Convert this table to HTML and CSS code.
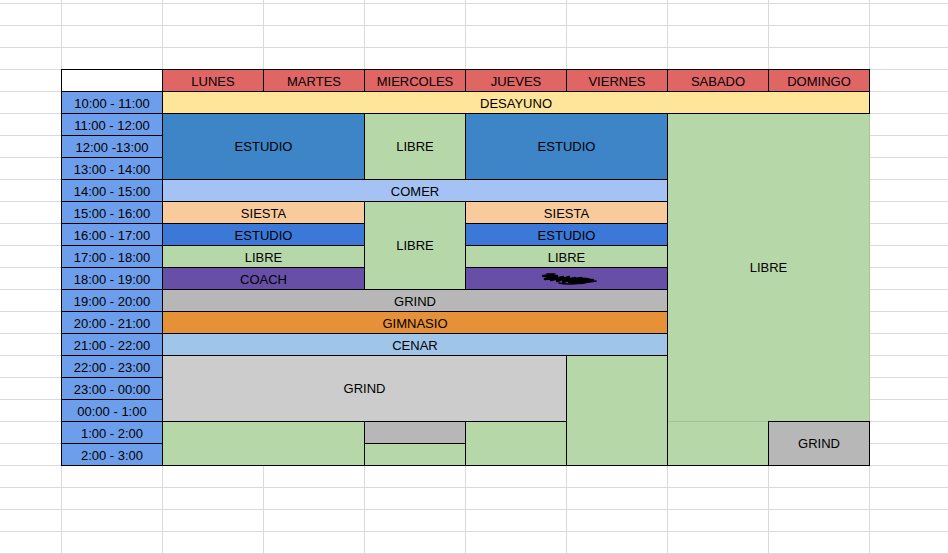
FILE: index.html
```html
<!DOCTYPE html>
<html lang="es">
<head>
<meta charset="utf-8">
<title>Horario</title>
<link rel="stylesheet" href="styles.css">
</head>
<body>
<div class="sheet">
  <div class="timetable">
    <div class="cell corner"></div>
    <div class="cell day">LUNES</div>
    <div class="cell day">MARTES</div>
    <div class="cell day">MIERCOLES</div>
    <div class="cell day">JUEVES</div>
    <div class="cell day">VIERNES</div>
    <div class="cell day">SABADO</div>
    <div class="cell day">DOMINGO</div>

    <div class="cell time">10:00 - 11:00</div>
    <div class="cell desayuno c7">DESAYUNO</div>

    <div class="cell time">11:00 - 12:00</div>
    <div class="cell estudio c2 r3">ESTUDIO</div>
    <div class="cell libre r3">LIBRE</div>
    <div class="cell estudio c2 r3">ESTUDIO</div>
    <div class="cell libre big c2 r14">LIBRE</div>

    <div class="cell time">12:00 -13:00</div>
    <div class="cell time">13:00 - 14:00</div>

    <div class="cell time">14:00 - 15:00</div>
    <div class="cell comer c5">COMER</div>

    <div class="cell time">15:00 - 16:00</div>
    <div class="cell siesta c2">SIESTA</div>
    <div class="cell libre r4">LIBRE</div>
    <div class="cell siesta c2">SIESTA</div>

    <div class="cell time">16:00 - 17:00</div>
    <div class="cell estudio2 c2">ESTUDIO</div>
    <div class="cell estudio2 c2">ESTUDIO</div>

    <div class="cell time">17:00 - 18:00</div>
    <div class="cell libre c2">LIBRE</div>
    <div class="cell libre c2">LIBRE</div>

    <div class="cell time">18:00 - 19:00</div>
    <div class="cell coach c2">COACH</div>
    <div class="cell coach c2">
      <svg class="scribble" width="56" height="14" viewBox="0 0 56 14" aria-hidden="true">
        <path d="M2 4 L12 3 L6 6 L16 4 L10 8 L22 5 L16 9 L28 5 L22 10 L34 6 L28 10 L40 6 L34 10 L46 7 L40 11 L52 8" fill="none" stroke="#000" stroke-width="2.4" stroke-linejoin="round" stroke-linecap="round"/>
        <path d="M4 7 C12 5 20 8 30 7 S44 6 50 8" fill="none" stroke="#000" stroke-width="2.6" stroke-linecap="round"/>
        <path d="M6 2 L14 2 M18 11 C26 13 34 12 42 11 L55 9" fill="none" stroke="#000" stroke-width="1.6" stroke-linecap="round"/>
        <path d="M20 8 L38 8 L30 11 L44 9" fill="none" stroke="#000" stroke-width="2.2" stroke-linecap="round" stroke-linejoin="round"/>
      </svg>
    </div>

    <div class="cell time">19:00 - 20:00</div>
    <div class="cell grind c5">GRIND</div>

    <div class="cell time">20:00 - 21:00</div>
    <div class="cell gimnasio c5">GIMNASIO</div>

    <div class="cell time">21:00 - 22:00</div>
    <div class="cell cenar c5">CENAR</div>

    <div class="cell time">22:00 - 23:00</div>
    <div class="cell grind-light c4 r3">GRIND</div>
    <div class="cell libre r5"></div>

    <div class="cell time">23:00 - 00:00</div>
    <div class="cell time">00:00 - 1:00</div>

    <div class="cell time">1:00 - 2:00</div>
    <div class="cell libre c2 r2"></div>
    <div class="cell grind"></div>
    <div class="cell libre r2"></div>
    <div class="cell libre r2 open-top"></div>
    <div class="cell grind r2">GRIND</div>

    <div class="cell time">2:00 - 3:00</div>
    <div class="cell libre"></div>
  </div>
</div>
</body>
</html>
```

FILE: styles.css
```css
html, body {
  margin: 0;
  padding: 0;
}

body {
  font-family: "Liberation Sans", Arial, sans-serif;
  font-size: 13px;
  color: #000;
  background: #fff;
}

.sheet {
  height: 554px;
  overflow: hidden;
  padding: 69px 0 0 61px;
  box-sizing: border-box;
  background-color: #fff;
  background-image:
    linear-gradient(to right, #dadada 1px, transparent 1px),
    linear-gradient(to bottom, #dadada 1px, transparent 1px);
  background-size: 101px 100%, 100% 22px;
  background-position: 61px 0, 0 3px;
}

.timetable {
  display: grid;
  width: max-content;
  grid-template-columns: repeat(8, 100px);
  grid-template-rows: repeat(18, 21px);
  gap: 1px;
  padding: 1px;
  background: #000;
}

.cell {
  display: flex;
  align-items: center;
  justify-content: center;
  padding-top: 1px;
  box-sizing: border-box;
  white-space: nowrap;
  line-height: 15px;
}

.c2 { grid-column: span 2; }
.c4 { grid-column: span 4; }
.c5 { grid-column: span 5; }
.c7 { grid-column: span 7; }
.r2 { grid-row: span 2; }
.r3 { grid-row: span 3; }
.r4 { grid-row: span 4; }
.r5 { grid-row: span 5; }
.r14 { grid-row: span 14; }

.r2, .r3, .r4, .r5, .r14 {
  padding-top: 0;
  padding-bottom: 1px;
}

.corner { background: #fff; }
.day { background: #e06666; }
.time { background: #6d9eeb; }
.desayuno { background: #ffe599; }
.estudio { background: #3d85c6; }
.estudio2 { background: #3c78d8; }
.libre { background: #b6d7a8; }
.comer { background: #a4c2f4; }
.siesta { background: #f9cb9c; }
.coach { background: #674ea7; }
.grind { background: #b7b7b7; }
.grind-light { background: #cccccc; }
.gimnasio { background: #e69138; }
.cenar { background: #9fc5e8; }

.big {
  margin-right: -1px;
  border-right: 1px solid #a3c596;
}

.open-top {
  margin-top: -1px;
  border-top: 1px solid #a3c596;
}

.scribble {
  display: block;
  margin-left: 4px;
}
```
